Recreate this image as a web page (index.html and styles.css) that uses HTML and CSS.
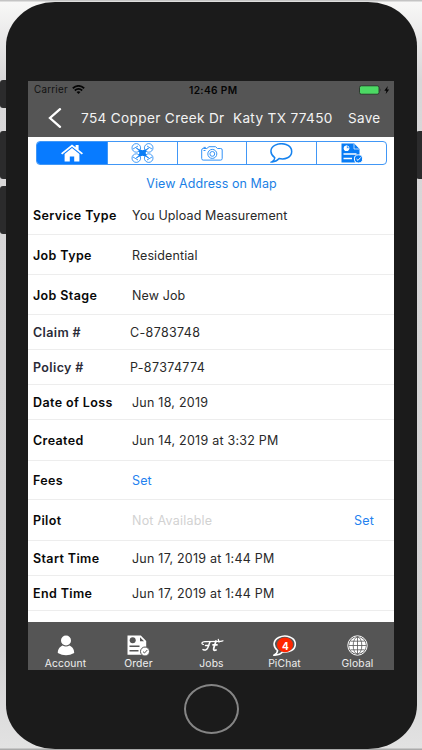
FILE: index.html
```html
<!DOCTYPE html>
<html lang="en">
<head>
<meta charset="utf-8">
<title>Job details</title>
<link rel="stylesheet" href="styles.css">
</head>
<body>
<i class="key key-mute"></i><i class="key key-up"></i><i class="key key-down"></i><i class="key key-power"></i>
<div class="phone">
<main class="screen">
  <header class="top">
    <div class="status">
      <span class="carrier">Carrier</span>
      <svg class="wifi" viewBox="0 0 13 9"><g fill="none" stroke="#050505" stroke-width="1.8"><path d="M.8 3.2Q6.5-1.4 12.2 3.2M2.8 5.5Q6.5 2.3 10.2 5.5"/></g><path d="M4.5 7Q6.5 5.3 8.500 7L6.500 9Z" fill="#050505"/></svg>
      <span class="clock">12:46 PM</span>
      <svg class="battery" viewBox="0 0 31 10"><rect x=".5" y=".8" width="19.500" height="8.400" rx="1.800" fill="#4cd964" stroke="#252525" stroke-width=".8"/><path d="M21.300 3.500q1.200 1.500 0 3" fill="#252525"/><path d="M28.800 1L25.300 5.700h2.100L26.700 9l3.500-4.600h-2.100z" fill="#050505"/></svg>
    </div>
    <div class="nav">
      <svg class="back" viewBox="0 0 14 20"><path d="M12 1.200L2 10l10 8.800" fill="none" stroke="#fff" stroke-width="2.300" stroke-linecap="round"/></svg>
      <h1 class="title">754 Copper Creek Dr&nbsp; Katy TX 77450</h1>
      <span class="save">Save</span>
    </div>
  </header>
  <nav class="segments">
    <span class="segment active"><svg width="22" height="18" viewBox="0 0 22 18" fill="#fff"><path d="M0 9.300L11 .4l3.600 2.900V1.100h3v4.700L22 9.300l-1.200 1.300L11 2.700 1.200 10.600z"/><path d="M3.600 10L11 4.100l7.400 5.900v7.500h-5.200v-5H8.800v5H3.600z"/></svg></span>
    <span class="segment"><svg width="23" height="20" viewBox="0 0 23 20"><g fill="none" stroke="#1483f5" stroke-width=".8"><circle cx="5.300" cy="4.900" r="4.300"/><circle cx="17.700" cy="4.900" r="4.300"/><circle cx="5.300" cy="15.100" r="4.300"/><circle cx="17.700" cy="15.100" r="4.300"/><path stroke-width="1.200" d="M5.300 4.900l12.400 10.200M17.700 4.900L5.300 15.100"/><path d="M2 6l5-3M16 3l5 3M2 14l5 3M16 17l5-3"/></g><path d="M7.500 6.300l4 1 4-1-.8 3.700.8 3.700-4-1-4 1 .8-3.700z" fill="#087cf5"/></svg></span>
    <span class="segment"><svg width="22" height="15" viewBox="0 0 22 15" fill="none" stroke="#3292f7" stroke-width="1"><path d="M2.200 2.500h3.600L8 .7h6.500l2 1.800h3.200q1.500 0 1.500 1.500v8.500q0 1.600-1.500 1.600H2.200q-1.500 0-1.500-1.600V4q0-1.500 1.500-1.500z"/><circle cx="11.300" cy="7.900" r="4.500"/><circle cx="11.300" cy="7.900" r="2.400"/><path d="M2.500 1.400h2.300M2.500 4.500h2"/></svg></span>
    <span class="segment"><svg width="23" height="20" viewBox="0 0 23 20"><path d="M4.700 14.600C-.5 10.600-.3 5 5.200 2.200c7-3.500 16.500-.3 16.500 6.300 0 5.900-6.600 8.500-12.600 7.100-1.600 1.900-4.400 3.400-7.300 3.300 2.300-1.400 3.100-2.600 2.900-4.300z" fill="none" stroke="#1682ee" stroke-width="1.500"/></svg></span>
    <span class="segment"><svg width="22" height="20" viewBox="0 0 22 20"><path d="M.5.500h12.700L18.500 6v8L14 19.500H.5z" fill="#087cf5"/><circle cx="5.500" cy="5.200" r="2.800" fill="#fff"/><path d="M5.500 2.400v2.800h2.800M13 1v5h5" fill="#087cf5" stroke="#fff" stroke-width=".7"/><path d="M2.500 11h13M2.500 15.500h8.500" stroke="#fff" stroke-width="1.500"/><circle cx="17.500" cy="15.900" r="4.100" fill="#087cf5" stroke="#fff"/><path d="M15.500 16l1.500 1.400 2.700-3" fill="none" stroke="#fff"/></svg></span>
  </nav>
  <a class="map-link"><span>View Address on Map</span></a>
  <dl class="details">
    <div class="row first"><dt>Service Type</dt><dd>You Upload Measurement</dd></div>
    <div class="row first"><dt>Job Type</dt><dd>Residential</dd></div>
    <div class="row first"><dt>Job Stage</dt><dd>New Job</dd></div>
    <div class="row short custom"><dt>Claim #</dt><dd>C-8783748</dd></div>
    <div class="row short custom"><dt>Policy #</dt><dd>P-87374774</dd></div>
    <div class="row short"><dt>Date of Loss</dt><dd>Jun 18, 2019</dd></div>
    <div class="row tall"><dt>Created</dt><dd>Jun 14, 2019 at 3:32 PM</dd></div>
    <div class="row fees"><dt>Fees</dt><dd class="link">Set</dd></div>
    <div class="row tall"><dt>Pilot</dt><dd class="empty">Not Available</dd><dd class="link action">Set</dd></div>
    <div class="row short"><dt>Start Time</dt><dd>Jun 17, 2019 at 1:44 PM</dd></div>
    <div class="row short"><dt>End Time</dt><dd>Jun 17, 2019 at 1:44 PM</dd></div>
  </dl>
  <nav class="tabs">
    <span class="tab"><svg width="18" height="21" viewBox="0 0 18 21" fill="#fff"><circle cx="9" cy="5.500" r="5"/><path d="M5.500 10.500q3.500 2 7 0C16 12 17.200 15 17.200 18q-8.200 4.500-16.400 0C.8 15 2 12 5.500 10.500z"/></svg>Account</span>
    <span class="tab"><svg width="23" height="21" viewBox="0 0 23 21"><path d="M.5.500h13.300L19.200 6v8l-4.500 5.700H.5z" fill="#fff"/><circle cx="5.700" cy="5.200" r="3" fill="#555"/><path d="M13 2.300v4h4z" fill="#555"/><path d="M2.500 11.200h10M2.500 15.800h9" stroke="#555" stroke-width="1.500"/><circle cx="18" cy="16.500" r="4.500" fill="#fff" stroke="#555"/><path d="M16 16.600l1.500 1.400 2.800-3" fill="none" stroke="#555"/></svg>Order</span>
    <span class="tab"><svg width="24" height="21" viewBox="0 0 24 21" fill="none" stroke="#fff" stroke-linecap="round"><path d="M3.500 9.500C.8 9.200 1.500 6.400 5.500 6.700l15-.4q1.600 0 2.500-.5M18.300 4.400l.7 3" stroke-width="1.200"/><path d="M10 6.800L7.800 12.800q-1.300 3.300-4.800 1.800M5.500 10.500h3.500" stroke-width="1.500"/><path d="M16 6l-2.200 7q-.8 3.200 2.200 2M13 9.800h4" stroke-width="1.800"/></svg>Jobs</span>
    <span class="tab chat"><svg width="23" height="21" viewBox="0 0 23 21"><path d="M4.500 15.500C-.7 11 .3 5.200 5.700 2.500 12.800-1 22.300 2.200 22.300 9c0 6.300-6.600 8.800-12.500 7.600C8 18.900 4.500 20.300 1 20.100q3.600-2.200 3.500-4.600z" fill="#555" stroke="#fff" stroke-width="1.600"/><ellipse cx="12" cy="9.800" rx="8" ry="7.400" fill="#ff2600"/></svg><b class="badge">4</b>PiChat</span>
    <span class="tab"><svg width="21" height="21" viewBox="0 0 21 21"><circle cx="10.500" cy="10.500" r="9.700" fill="#555" stroke="#fff" stroke-width="1"/><circle cx="10.500" cy="10.500" r="8.500" fill="#fff"/><g fill="none" stroke="#555" stroke-width=".8"><ellipse cx="10.500" cy="10.500" rx="4.300" ry="8.500"/><path d="M10.500 2v17M2 10.500h17M3.500 6.200h14M3.500 14.800h14"/></g></svg>Global</span>
  </nav>
</main>
<div class="home"></div>
</div>
</body>
</html>
```
FILE: styles.css
```css
* { box-sizing: border-box; }
body {
  position: relative;
  width: 422px;
  height: 750px;
  margin: 0;
  padding: 2px 5px 1px 6px;
  overflow: hidden;
  background: linear-gradient(#c4c4c4 1px, #f8f8f7 2px, #d8d7d8 80px, #d4d3d4 650px, #e2e2e2 748px, #aaa 749px);
  font-family: Inter, "Liberation Sans", sans-serif;
}
.phone {
  position: relative;
  display: flex;
  flex-direction: column;
  align-items: center;
  height: 747px;
  padding-top: 79px;
  background: #1b1b1b;
  border-radius: 49px / 44px;
}
.key { position: absolute; left: 0; width: 7px; height: 48px; background: #2b2b2c; border-radius: 3px 0 0 3px; }
.key-mute { top: 80px; height: 28px; }
.key-up { top: 131px; }
.key-down { top: 186px; }
.key-power { top: 131px; left: 416px; }
.screen { display: flex; flex-direction: column; width: 366px; height: 589px; margin-right: 1px; background: #fff; }
.top { height: 56px; background: #555; }
.status { display: flex; align-items: center; height: 17px; padding-left: 6px; font-size: 9.800px; color: #111; }
.carrier { width: 34px; letter-spacing: .25px; white-space: nowrap; }
.wifi { width: 13px; height: 9px; margin-left: 4px; }
.clock { width: 50px; margin-left: 104px; font-size: 10.200px; font-weight: 600; letter-spacing: .35px; color: #050505; white-space: nowrap; }
.battery { width: 31px; height: 10px; margin-left: 120px; }
.nav { display: flex; align-items: center; height: 39px; color: #fff; }
.back { width: 14px; height: 20px; margin-left: 20px; }
.title { width: 253px; margin: 1px 0 0 19px; font-size: 13.600px; font-weight: 400; letter-spacing: .35px; white-space: nowrap; color: #f3f3f3; }
.save { margin-left: 14px; font-size: 13.500px; letter-spacing: .3px; color: #f3f3f3; }
.segments { display: grid; grid-template-columns: repeat(5, 1fr); flex: none; width: 351px; height: 24px; margin: 4px 0 0 8px; border: 1px solid #4197f6; border-radius: 4px; overflow: hidden; }
.segment { display: flex; align-items: center; justify-content: center; border-left: 1px solid #4197f6; }
.segment:first-child { border-left: 0; }
.active { background: #087bff; }
.map-link { display: flex; align-items: center; justify-content: center; flex: none; height: 30px; padding: 6px 0 0 1px; font-size: 12.500px; letter-spacing: .07px; color: #1b7fe5; }
.details { flex: 1; margin: 0; font-size: 12.500px; color: #292929; }
.row { display: flex; align-items: center; height: 40px; padding-left: 5px; border-bottom: 1px solid #ededed; white-space: nowrap; }
.row.first { padding-top: 1px; }
.row.short { height: 35px; }
.row.tall { height: 41px; }
.row.fees { height: 39px; }
dt { width: 99px; font-weight: 600; letter-spacing: .38px; color: #080808; }
dd { margin: 0; letter-spacing: .12px; }
.custom dt { width: 97px; color: #2b2b38; }
.custom dd { letter-spacing: .35px; }
.row.tall dd, .row.short:not(.custom) dd { letter-spacing: .23px; }
.row .empty { color: #d2d2d2; letter-spacing: .1px; }
.link { color: #2482ef; }
.row .action { margin: 0 20px 0 auto; }
.tabs { display: grid; grid-template-columns: repeat(5, 1fr); height: 48px; padding-left: 1px; background: #555; }
.tab { position: relative; display: flex; flex-direction: column; align-items: center; padding-top: 13px; font-size: 10.300px; line-height: 15px; letter-spacing: .15px; color: #eee; }
.tab svg { flex: none; }
.badge { position: absolute; top: 17px; left: 34px; font-size: 10px; line-height: 14px; color: #fff; }
.home { width: 55px; height: 50px; margin-top: 14px; border: 2px solid #858585; border-radius: 50%; }
```
